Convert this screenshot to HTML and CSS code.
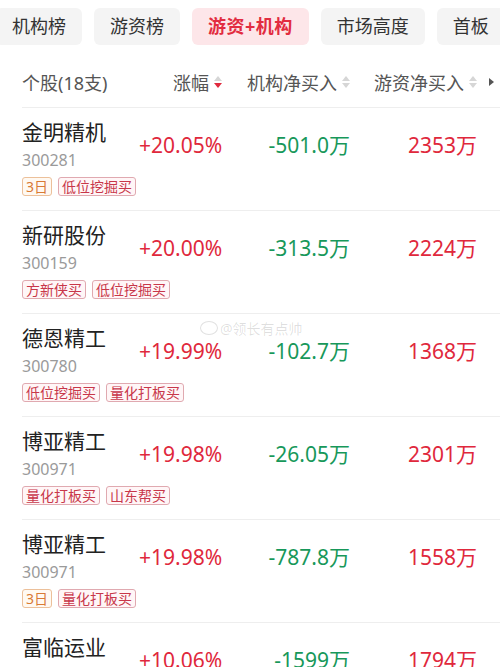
FILE: index.html
```html
<!DOCTYPE html>
<html lang="zh-CN">

<head>
    <meta charset="UTF-8">
    <meta name="viewport" content="width=device-width, initial-scale=1.0">
    <title>游资+机构</title>
    <link rel="stylesheet" href="styles.css">
</head>

<body>
    <div class="page">
        <div class="tabs">
            <div class="tab">机构榜</div>
            <div class="tab">游资榜</div>
            <div class="tab active">游资+机构</div>
            <div class="tab">市场高度</div>
            <div class="tab">首板</div>
        </div>

        <div class="list">
            <div class="head">
                <div class="h-name">个股(18支)</div>
                <div class="h-col">涨幅<span class="sort down"><i class="up"></i><i class="dn"></i></span></div>
                <div class="h-col">机构净买入<span class="sort"><i class="up"></i><i class="dn"></i></span></div>
                <div class="h-col">游资净买入<span class="sort"><i class="up"></i><i class="dn"></i></span></div>
                <div class="h-more"></div>
            </div>

            <div class="row">
                <div class="info">
                    <div class="name">金明精机</div>
                    <div class="code">300281</div>
                </div>
                <div class="val red">+20.05%</div>
                <div class="val green">-501.0万</div>
                <div class="val red">2353万</div>
                <div class="tags"><span class="tag days">3日</span><span class="tag">低位挖掘买</span></div>
            </div>

            <div class="row">
                <div class="info">
                    <div class="name">新研股份</div>
                    <div class="code">300159</div>
                </div>
                <div class="val red">+20.00%</div>
                <div class="val green">-313.5万</div>
                <div class="val red">2224万</div>
                <div class="tags"><span class="tag">方新侠买</span><span class="tag">低位挖掘买</span></div>
            </div>

            <div class="row">
                <div class="info">
                    <div class="name">德恩精工</div>
                    <div class="code">300780</div>
                </div>
                <div class="val red">+19.99%</div>
                <div class="val green">-102.7万</div>
                <div class="val red">1368万</div>
                <div class="tags"><span class="tag">低位挖掘买</span><span class="tag">量化打板买</span></div>
                <div class="mark"><span class="mark-logo"></span>@领长有点帅</div>
            </div>

            <div class="row">
                <div class="info">
                    <div class="name">博亚精工</div>
                    <div class="code">300971</div>
                </div>
                <div class="val red">+19.98%</div>
                <div class="val green">-26.05万</div>
                <div class="val red">2301万</div>
                <div class="tags"><span class="tag">量化打板买</span><span class="tag">山东帮买</span></div>
            </div>

            <div class="row">
                <div class="info">
                    <div class="name">博亚精工</div>
                    <div class="code">300971</div>
                </div>
                <div class="val red">+19.98%</div>
                <div class="val green">-787.8万</div>
                <div class="val red">1558万</div>
                <div class="tags"><span class="tag days">3日</span><span class="tag">量化打板买</span></div>
            </div>

            <div class="row">
                <div class="info">
                    <div class="name">富临运业</div>
                    <div class="code">002357</div>
                </div>
                <div class="val red">+10.06%</div>
                <div class="val green">-1599万</div>
                <div class="val red">1794万</div>
                <div class="tags"><span class="tag">低位挖掘买</span></div>
            </div>
        </div>
    </div>
</body>

</html>
```

FILE: styles.css
```css
body {
    margin: 0;
    background: #fff;
    font-family: "Noto Sans", "Noto Sans CJK SC", sans-serif;
    color: #222;
}

.page {
    height: 667px;
    overflow: hidden;
}

.tabs {
    display: flex;
    gap: 12px;
    margin: 8px 0 0 -4px;
    white-space: nowrap;
}

.tab {
    flex: none;
    height: 37px;
    line-height: 37px;
    padding: 0 16px;
    font-size: 18px;
    color: #333;
    background-color: #f4f4f4;
    border-radius: 6px;
}

.tab.active {
    color: #e22c40;
    background-color: #fde6e9;
    font-weight: bold;
    letter-spacing: 0.5px;
}

.list {
    margin-top: 12px;
}

.head {
    display: grid;
    grid-template-columns: 117px 83px 128px 127px 23px;
    align-items: center;
    height: 50px;
    margin-left: 22px;
    border-bottom: 1px solid #eee;
    font-size: 18px;
    color: #555;
}

.h-col {
    display: flex;
    align-items: center;
    justify-content: flex-end;
    white-space: nowrap;
}

.sort {
    display: flex;
    flex-direction: column;
    gap: 2px;
    margin-left: 5px;
    width: 8px;
}

.sort i {
    display: block;
    width: 0;
    height: 0;
    border-left: 4px solid transparent;
    border-right: 4px solid transparent;
}

.sort .up {
    border-bottom: 5px solid #d6d6d6;
}

.sort .dn {
    border-top: 5px solid #d6d6d6;
}

.sort.down .dn {
    border-top-color: #e02a3e;
}

.h-more {
    justify-self: end;
    width: 0;
    height: 0;
    margin-right: 6px;
    border-top: 4px solid transparent;
    border-bottom: 4px solid transparent;
    border-left: 5px solid #555;
}

.row {
    position: relative;
    display: grid;
    grid-template-columns: 117px 83px 128px 127px;
    grid-template-areas:
        "info pct inst hot"
        "tags tags tags tags";
    margin-left: 22px;
    padding: 10px 0 14px;
    border-bottom: 1px solid #eee;
}

.info {
    grid-area: info;
}

.name {
    font-size: 21px;
    line-height: 28px;
    color: #222;
    white-space: nowrap;
}

.code {
    margin-top: 2px;
    font-size: 16px;
    line-height: 24px;
    color: #9a9a9a;
}

.val {
    align-self: center;
    text-align: right;
    font-size: 21px;
    line-height: 28px;
    white-space: nowrap;
}

.red {
    color: #e0283c;
}

.green {
    color: #17985a;
}

.tags {
    grid-area: tags;
    display: flex;
    gap: 6px;
    margin-top: 5px;
}

.tag {
    height: 17px;
    line-height: 17px;
    padding: 0 3px;
    font-size: 14px;
    color: #c8374a;
    background: #fff6f7;
    border: 1px solid #e0a9b0;
    border-radius: 3px;
}

.tag.days {
    color: #d97a35;
    background: #fff9f2;
    border-color: #ecc09a;
}

.mark {
    position: absolute;
    left: 178px;
    top: 4px;
    display: flex;
    align-items: center;
    gap: 2px;
    font-size: 14px;
    color: rgba(0, 0, 0, 0.13);
}

.mark-logo {
    width: 16px;
    height: 12px;
    border: 1.5px solid rgba(0, 0, 0, 0.12);
    border-radius: 50%;
}
```
